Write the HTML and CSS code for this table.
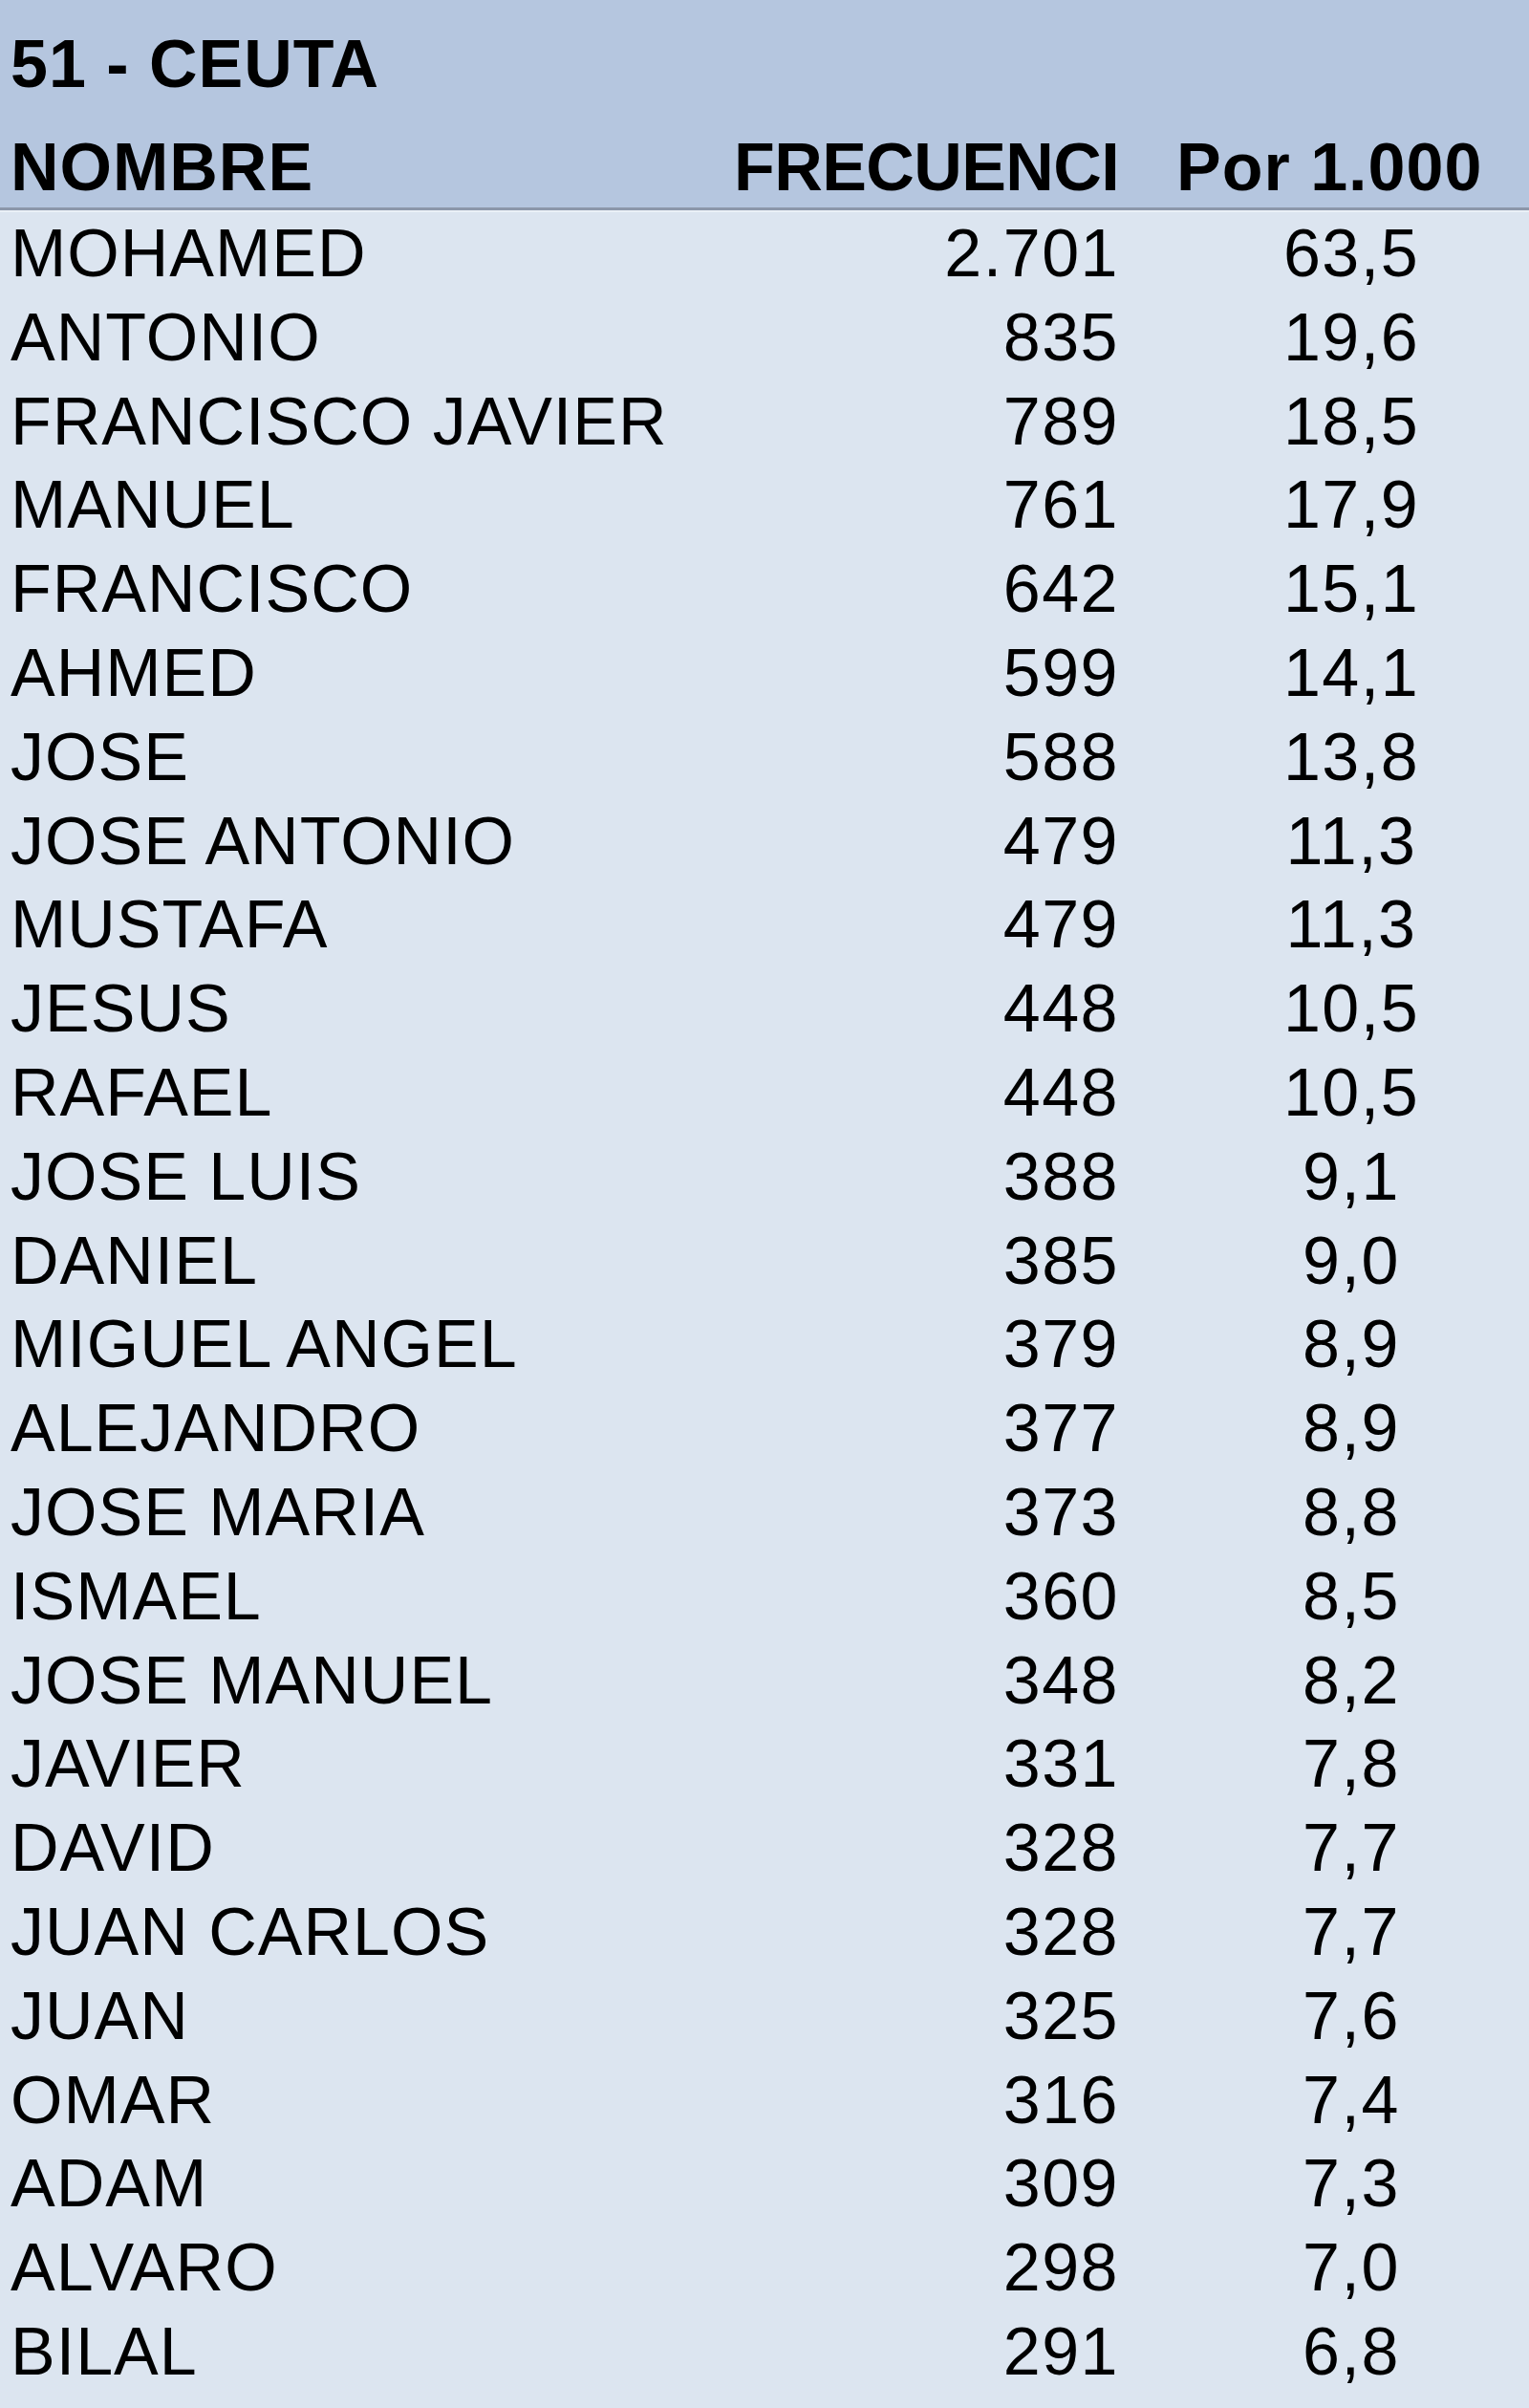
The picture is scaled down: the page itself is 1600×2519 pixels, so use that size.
FILE: index.html
```html
<!DOCTYPE html>
<html lang="es">
<head>
<meta charset="utf-8">
<title>51 - CEUTA</title>
<link rel="stylesheet" href="styles.css">
</head>
<body>
<div class="sheet">
  <div class="head">
    <div class="title">51 - CEUTA</div>
    <div class="row hrow">
      <div class="c-name">NOMBRE</div>
      <div class="c-freq">FRECUENCI</div>
      <div class="c-per c-per-h">Por 1.000</div>
    </div>
  </div>
  <div class="body">
    <div class="row"><div class="c-name">MOHAMED</div><div class="c-freq">2.701</div><div class="c-per">63,5</div></div>
    <div class="row"><div class="c-name">ANTONIO</div><div class="c-freq">835</div><div class="c-per">19,6</div></div>
    <div class="row"><div class="c-name">FRANCISCO JAVIER</div><div class="c-freq">789</div><div class="c-per">18,5</div></div>
    <div class="row"><div class="c-name">MANUEL</div><div class="c-freq">761</div><div class="c-per">17,9</div></div>
    <div class="row"><div class="c-name">FRANCISCO</div><div class="c-freq">642</div><div class="c-per">15,1</div></div>
    <div class="row"><div class="c-name">AHMED</div><div class="c-freq">599</div><div class="c-per">14,1</div></div>
    <div class="row"><div class="c-name">JOSE</div><div class="c-freq">588</div><div class="c-per">13,8</div></div>
    <div class="row"><div class="c-name">JOSE ANTONIO</div><div class="c-freq">479</div><div class="c-per">11,3</div></div>
    <div class="row"><div class="c-name">MUSTAFA</div><div class="c-freq">479</div><div class="c-per">11,3</div></div>
    <div class="row"><div class="c-name">JESUS</div><div class="c-freq">448</div><div class="c-per">10,5</div></div>
    <div class="row"><div class="c-name">RAFAEL</div><div class="c-freq">448</div><div class="c-per">10,5</div></div>
    <div class="row"><div class="c-name">JOSE LUIS</div><div class="c-freq">388</div><div class="c-per">9,1</div></div>
    <div class="row"><div class="c-name">DANIEL</div><div class="c-freq">385</div><div class="c-per">9,0</div></div>
    <div class="row"><div class="c-name">MIGUEL ANGEL</div><div class="c-freq">379</div><div class="c-per">8,9</div></div>
    <div class="row"><div class="c-name">ALEJANDRO</div><div class="c-freq">377</div><div class="c-per">8,9</div></div>
    <div class="row"><div class="c-name">JOSE MARIA</div><div class="c-freq">373</div><div class="c-per">8,8</div></div>
    <div class="row"><div class="c-name">ISMAEL</div><div class="c-freq">360</div><div class="c-per">8,5</div></div>
    <div class="row"><div class="c-name">JOSE MANUEL</div><div class="c-freq">348</div><div class="c-per">8,2</div></div>
    <div class="row"><div class="c-name">JAVIER</div><div class="c-freq">331</div><div class="c-per">7,8</div></div>
    <div class="row"><div class="c-name">DAVID</div><div class="c-freq">328</div><div class="c-per">7,7</div></div>
    <div class="row"><div class="c-name">JUAN CARLOS</div><div class="c-freq">328</div><div class="c-per">7,7</div></div>
    <div class="row"><div class="c-name">JUAN</div><div class="c-freq">325</div><div class="c-per">7,6</div></div>
    <div class="row"><div class="c-name">OMAR</div><div class="c-freq">316</div><div class="c-per">7,4</div></div>
    <div class="row"><div class="c-name">ADAM</div><div class="c-freq">309</div><div class="c-per">7,3</div></div>
    <div class="row"><div class="c-name">ALVARO</div><div class="c-freq">298</div><div class="c-per">7,0</div></div>
    <div class="row"><div class="c-name">BILAL</div><div class="c-freq">291</div><div class="c-per">6,8</div></div>
  </div>
</div>
</body>
</html>
```

FILE: styles.css
```css
html, body {
  margin: 0;
  padding: 0;
  background: #dce5f0;
}

.sheet {
  width: 1600px;
  min-height: 2519px;
  background: #dce5f0;
  font-family: "Liberation Sans", Arial, sans-serif;
  font-size: 70px;
  letter-spacing: 1px;
  color: #000;
  overflow: hidden;
}

.head {
  background: #b5c6df;
  border-bottom: 3px solid #8c97aa;
}

.title {
  height: 132px;
  box-sizing: border-box;
  padding: 24px 0 0 11px;
  line-height: 87.8px;
  font-weight: bold;
  white-space: nowrap;
}

.row {
  display: grid;
  grid-template-columns: 760px 411px 1fr;
  height: 87.8px;
  line-height: 87.8px;
  white-space: nowrap;
}

.hrow {
  font-weight: bold;
  height: 85px;
}

.hrow .c-freq {
  letter-spacing: -0.6px;
}

.body {
  border-top: 2px solid #eaf0f7;
}

.c-name {
  padding-left: 11px;
}

.c-freq {
  text-align: right;
  letter-spacing: 1.5px;
}

.c-per {
  text-align: center;
  padding-left: 57px;
  letter-spacing: 1.5px;
}

.c-per-h {
  text-align: left;
  padding-left: 60px;
  letter-spacing: 1px;
}
```
